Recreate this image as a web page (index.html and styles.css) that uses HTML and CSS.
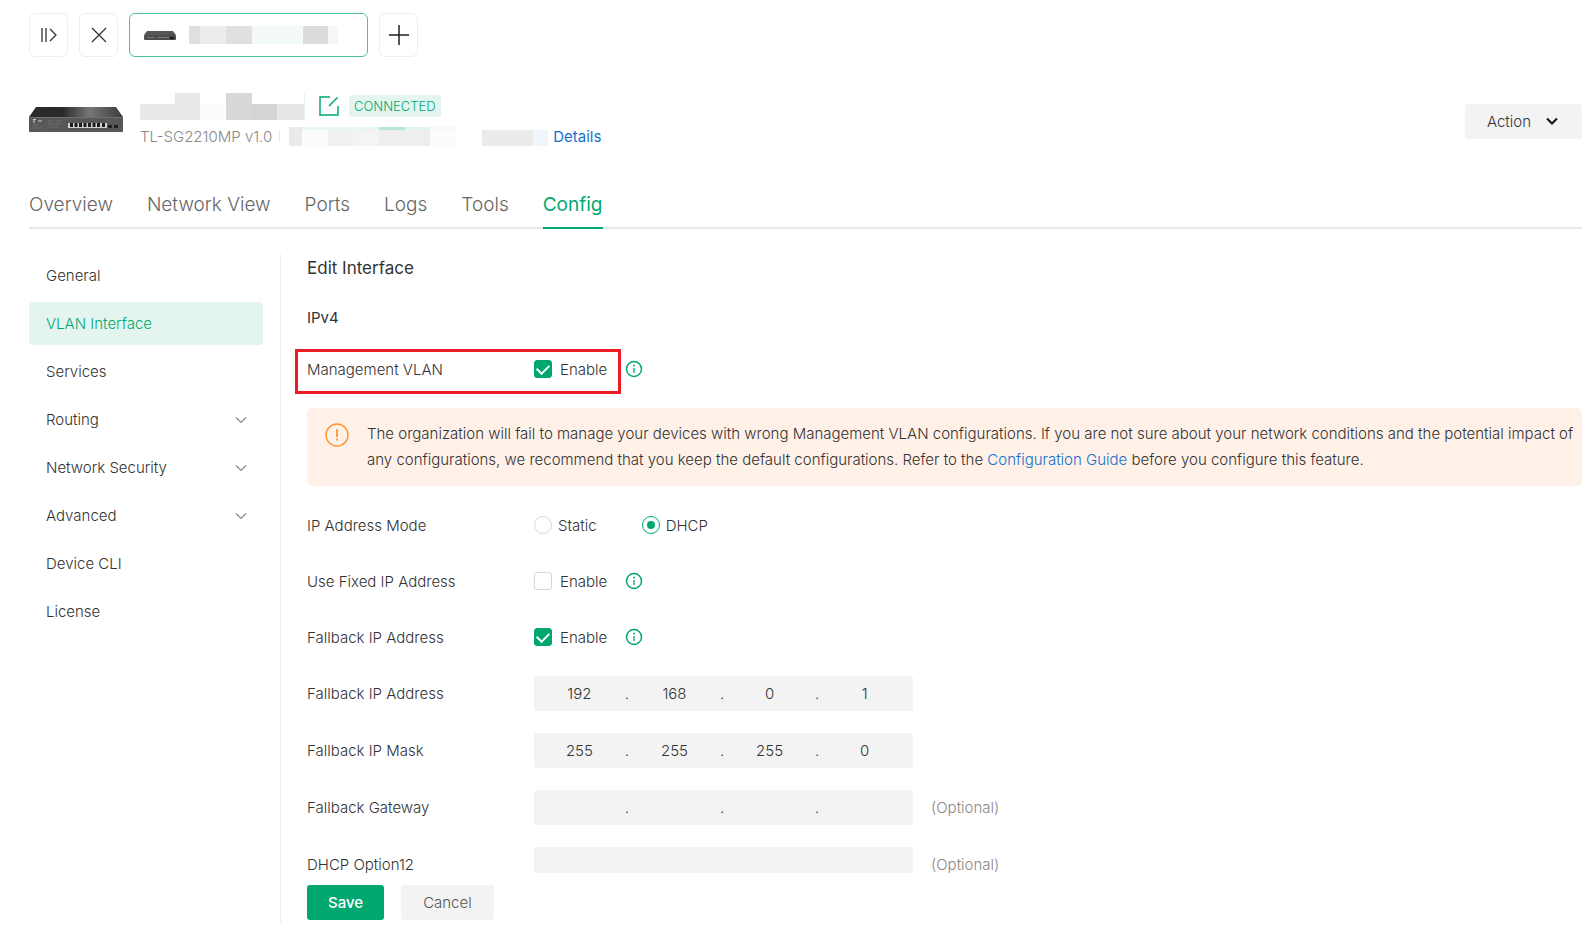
FILE: index.html
```html
<!DOCTYPE html>
<html lang="en">
<head>
  <meta charset="UTF-8">
  <meta name="viewport" content="width=device-width, initial-scale=1.0">
  <title>Device Config</title>
  <link rel="stylesheet" href="styles.css">
</head>
<body>
  <!-- shared shapes -->
  <svg class="defs" aria-hidden="true">
    <linearGradient id="top-shade" x1="0" x2="1">
      <stop offset="0" stop-color="#2c2c2c"/>
      <stop offset="0.35" stop-color="#2a2a2a"/>
      <stop offset="0.65" stop-color="#777"/>
      <stop offset="1" stop-color="#3a3a3a"/>
    </linearGradient>
    <symbol id="switch" viewBox="0 0 94 25">
      <path d="M7 0H87L94 10H0Z" fill="url(#top-shade)"/>
      <rect y="10" width="94" height="15" rx="1" fill="#58585a"/>
      <path d="M0 10.500H94" stroke="#707070"/>
      <path d="M4 12.500h3M5 12v4M9 14h4" stroke="#ccc" stroke-width="1"/>
      <path d="M4 18h5M4 21h10M19 14h6M27 14h5M19 17h14M19 20h10" stroke="#6c6c6c" stroke-width="1"/>
      <rect x="39" y="16" width="39" height="5" fill="#d2d2d2"/>
      <path d="M42.500 16v4M47 16v4M51.500 16v4M56 16v4M60.500 16v4M65 16v4M69.500 16v4M74.500 16v4" stroke="#1c1c1c" stroke-width="3"/>
      <path d="M79 19.500h4M85 19.500h4" stroke="#222" stroke-width="3"/>
    </symbol>
    <symbol id="switch-small" viewBox="0 0 32 9">
      <path d="M3 0H29L32 4H0Z" fill="#555"/>
      <rect y="4" width="32" height="5" rx="1" fill="#4c4c4e"/>
      <path d="M3 6.500h8M14 6.500h11" stroke="#777"/>
      <path d="M26 7h4" stroke="#1c1c1c" stroke-width="2"/>
    </symbol>
    <symbol id="info" viewBox="0 0 18 18">
      <circle cx="9" cy="9" r="7.500" fill="none" stroke="#00a870" stroke-width="1.500"/>
      <path d="M9 8v5" stroke="#00a870" stroke-width="1.300"/>
      <circle cx="9" cy="5.500" r="0.900" fill="#00a870"/>
    </symbol>
    <symbol id="chevron" viewBox="0 0 12 12">
      <path d="M1 3.500L6 8.500L11 3.500" fill="none" stroke="currentColor" stroke-width="1.200"/>
    </symbol>
  </svg>

  <div class="device-bar">
    <button class="bar-button" aria-label="Expand">
      <svg width="20" height="20" viewBox="0 0 20 20"><path d="M3 3v14M7 3v14M11 4l6 6l-6 6" fill="none" stroke="#333" stroke-width="1.300"/></svg>
    </button>
    <button class="bar-button" aria-label="Close">
      <svg width="20" height="20" viewBox="0 0 20 20"><path d="M3 3l14 14M17 3L3 17" fill="none" stroke="#333" stroke-width="1.300"/></svg>
    </button>
    <button class="device-tab" aria-label="Device">
      <svg width="32" height="9"><use href="#switch-small"/></svg>
      <svg width="149" height="18">
        <rect width="11" height="18" fill="#dfdfdf"/>
        <rect x="11" width="26" height="18" fill="#ececec"/>
        <rect x="37" width="26" height="18" fill="#e0e0e0"/>
        <rect x="63" width="51" height="18" fill="#f4faf8"/>
        <rect x="114" width="25" height="18" fill="#dcdcdc"/>
        <rect x="139" width="10" height="18" fill="#f6f6f6"/>
      </svg>
    </button>
    <button class="bar-button" aria-label="Add">
      <svg width="20" height="20" viewBox="0 0 20 20"><path d="M0 10h20M10 0v20" stroke="#222" stroke-width="1.500"/></svg>
    </button>
  </div>

  <header class="device-header">
    <svg class="device-picture" width="94" height="25"><use href="#switch"/></svg>
    <div class="device-info">
      <div class="device-line">
        <svg width="165" height="27">
          <rect y="11" width="35" height="16" fill="#e9e9e9"/>
          <rect x="35" width="25" height="27" fill="#e8e8e8"/>
          <rect x="60" y="11" width="26" height="16" fill="#fcfcfc"/>
          <rect x="86" width="26" height="27" fill="#d8d8d8"/>
          <rect x="112" y="11" width="25" height="16" fill="#d4d4d4"/>
          <rect x="137" y="11" width="27" height="16" fill="#e6e6e6"/>
          <rect x="164" width="1" height="27" fill="#e6f5f0"/>
        </svg>
        <button class="edit-button" aria-label="Edit name">
          <svg width="22" height="22" viewBox="0 0 22 22"><path d="M12 2H2V20H20V11M11 11L19.500 2.500" fill="none" stroke="#00a870" stroke-width="1.500"/></svg>
        </button>
        <span class="badge">CONNECTED</span>
      </div>
      <div class="device-line model-line">
        <span>TL-SG2210MP v1.0</span>
        <i class="separator"></i>
        <svg width="259" height="19">
          <rect width="13" height="19" fill="#eaeaea"/>
          <rect x="13" width="26" height="19" fill="#fcfcfc"/>
          <rect x="39" width="25" height="19" fill="#f0f0f0"/>
          <rect x="64" width="26" height="19" fill="#f4f4f4"/>
          <rect x="90" width="51" height="19" fill="#eee"/>
          <rect x="141" width="26" height="19" fill="#fcfcfc"/>
          <rect x="13" width="77" height="3" fill="#e8f6f1"/>
          <rect x="90" width="26" height="3" fill="#b8e6d6"/>
          <rect x="116" width="25" height="3" fill="#dff3eb"/>
          <rect x="141" width="26" height="3" fill="#f5fbf9"/>
          <rect x="193" y="3" width="51" height="16" fill="#ebebeb"/>
          <rect x="244" y="3" width="15" height="16" fill="#f0f5fc"/>
        </svg>
        <a href="#">Details</a>
      </div>
    </div>
    <button class="action-button">Action <svg width="12" height="12" viewBox="0 0 12 12"><path d="M1 3.500L6 8.500L11 3.500" fill="none" stroke="#111" stroke-width="2"/></svg></button>
  </header>

  <nav class="tabs">
    <a href="#">Overview</a>
    <a href="#">Network View</a>
    <a href="#">Ports</a>
    <a href="#">Logs</a>
    <a href="#">Tools</a>
    <a href="#" class="active">Config</a>
  </nav>

  <div class="content">
    <nav class="sidebar">
      <a href="#">General</a>
      <a href="#" class="active">VLAN Interface</a>
      <a href="#">Services</a>
      <a href="#">Routing <svg width="12" height="12"><use href="#chevron"/></svg></a>
      <a href="#">Network Security <svg width="12" height="12"><use href="#chevron"/></svg></a>
      <a href="#">Advanced <svg width="12" height="12"><use href="#chevron"/></svg></a>
      <a href="#">Device CLI</a>
      <a href="#">License</a>
    </nav>

    <form class="panel">
      <div class="fields">
        <h2>Edit Interface</h2>
        <h3>IPv4</h3>

        <div class="row management">
          <span class="label">Management VLAN</span>
          <label class="check"><input type="checkbox" checked> Enable</label>
          <svg class="info" width="18" height="18"><use href="#info"/></svg>
          <div class="highlight"></div>
        </div>

        <div class="alert">
          <svg width="24" height="24" viewBox="0 0 24 24"><circle cx="12" cy="12" r="11" fill="none" stroke="#ff9433" stroke-width="1.400"/><path d="M12 6v8M12 15.500v2" stroke="#ff9433" stroke-width="1.800"/></svg>
          <p>The organization will fail to manage your devices with wrong Management VLAN configurations. If you are not sure about your network conditions and the potential impact of any configurations, we recommend that you keep the default configurations. Refer to the <a href="#">Configuration Guide</a> before you configure this feature.</p>
        </div>

        <div class="row">
          <span class="label">IP Address Mode</span>
          <label class="radio"><input type="radio" name="mode"> Static</label>
          <label class="radio"><input type="radio" name="mode" checked> DHCP</label>
        </div>
        <div class="row">
          <span class="label">Use Fixed IP Address</span>
          <label class="check"><input type="checkbox"> Enable</label>
          <svg class="info" width="18" height="18"><use href="#info"/></svg>
        </div>
        <div class="row">
          <span class="label">Fallback IP Address</span>
          <label class="check"><input type="checkbox" checked> Enable</label>
          <svg class="info" width="18" height="18"><use href="#info"/></svg>
        </div>

        <div class="row">
          <label class="label" for="ip">Fallback IP Address</label>
          <div class="ip-box">
            <input type="text" id="ip" value="192"><span>.</span>
            <input type="text" aria-label="IP part 2" value="168"><span>.</span>
            <input type="text" aria-label="IP part 3" value="0"><span>.</span>
            <input type="text" aria-label="IP part 4" value="1">
          </div>
        </div>
        <div class="row">
          <label class="label" for="mask">Fallback IP Mask</label>
          <div class="ip-box">
            <input type="text" id="mask" value="255"><span>.</span>
            <input type="text" aria-label="Mask part 2" value="255"><span>.</span>
            <input type="text" aria-label="Mask part 3" value="255"><span>.</span>
            <input type="text" aria-label="Mask part 4" value="0">
          </div>
        </div>
        <div class="row">
          <label class="label" for="gateway">Fallback Gateway</label>
          <div class="ip-box">
            <input type="text" id="gateway"><span>.</span>
            <input type="text" aria-label="Gateway part 2"><span>.</span>
            <input type="text" aria-label="Gateway part 3"><span>.</span>
            <input type="text" aria-label="Gateway part 4">
          </div>
          <span class="optional">(Optional)</span>
        </div>
        <div class="row">
          <label class="label" for="option12">DHCP Option12</label>
          <input type="text" id="option12" class="text-box">
          <span class="optional">(Optional)</span>
        </div>
      </div>

      <div class="buttons">
        <button type="button" class="save">Save</button>
        <button type="button" class="cancel">Cancel</button>
      </div>
    </form>
  </div>
</body>
</html>
```
FILE: styles.css
```css
* {
  box-sizing: border-box;
}

body {
  display: flex;
  flex-direction: column;
  height: 100vh;
  margin: 0;
  padding: 13px 12px 8px 29px;
  font-family: Inter, "Liberation Sans", sans-serif;
  font-size: 15px;
  font-weight: 300;
  color: #333;
  background: #fff;
}

button, input {
  font: inherit;
  color: inherit;
}

button {
  border: none;
  cursor: pointer;
}

a {
  color: #1270cc;
  text-decoration: none;
}

svg {
  display: block;
  flex: none;
}

.defs {
  position: absolute;
  width: 0;
  height: 0;
}

/* open devices */
.device-bar {
  display: flex;
  gap: 11px;
}

.bar-button,
.device-tab {
  display: flex;
  align-items: center;
  justify-content: center;
  width: 39px;
  height: 44px;
  padding: 0;
  background: #fff;
  border: 1px solid #eee;
  border-radius: 6px;
}

.device-tab {
  justify-content: flex-start;
  gap: 13px;
  width: 239px;
  padding: 0 14px;
  border-color: #4cc39d;
}

/* device header */
.device-header {
  display: flex;
  align-items: center;
  margin-top: 34px;
}

.device-picture {
  margin: 0 17px 4px 0;
}

.device-info {
  flex: 1;
}

.device-line {
  display: flex;
  align-items: center;
  height: 30px;
}

.edit-button {
  margin: 0 9px 0 13px;
  padding: 0;
  background: none;
}

.badge {
  padding: 0 5px;
  font-size: 13px;
  line-height: 22px;
  color: #00a870;
  background: #e4f5ef;
  border-radius: 3px;
}

.model-line {
  color: #888;
}

.separator {
  width: 1px;
  height: 12px;
  margin: 0 9px 0 7px;
  background: #e5e5e5;
}

.model-line a {
  margin-left: 5px;
  font-weight: 400;
}

.action-button {
  display: flex;
  align-items: center;
  gap: 15px;
  height: 35px;
  padding: 0 24px 0 22px;
  background: #f3f3f3;
  border-radius: 3px;
}

/* tabs */
.tabs {
  display: flex;
  gap: 34px;
  margin-top: 40px;
  border-bottom: 2px solid #e8e8e8;
}

.tabs a {
  margin-bottom: -2px;
  padding-bottom: 8px;
  font-size: 19px;
  line-height: 28px;
  color: #666;
  border-bottom: 2px solid transparent;
}

.tabs .active {
  font-weight: 400;
  color: #00a870;
  border-color: #00a870;
}

/* content */
.content {
  display: flex;
  flex: 1;
  min-height: 0;
  margin-top: 25px;
}

.sidebar {
  display: flex;
  flex-direction: column;
  gap: 5px;
  width: 252px;
  padding-right: 17px;
  border-right: 1px solid #eee;
}

.sidebar a {
  display: flex;
  align-items: center;
  justify-content: space-between;
  height: 43px;
  padding: 0 16px 0 17px;
  color: #333;
  border-radius: 4px;
}

.sidebar .active {
  color: #00a870;
  background: #e4f5ef;
}

.sidebar svg {
  color: #888;
}

.panel {
  display: flex;
  flex: 1;
  flex-direction: column;
  min-width: 0;
  padding: 0 0 3px 26px;
}

/* keeps room on the left for the highlight frame */
.fields {
  flex: 1;
  min-height: 0;
  margin-left: -12px;
  padding-left: 12px;
  overflow: hidden;
}

h2, h3 {
  margin: 0;
  font-weight: 400;
  color: #333;
}

h2 {
  font-size: 17px;
  line-height: 28px;
}

h3 {
  margin: 22px 0 20px;
  font-size: 15px;
  line-height: 28px;
}

.row {
  display: flex;
  align-items: center;
  min-height: 34px;
  margin-bottom: 22px;
}

.label {
  width: 227px;
}

.management {
  position: relative;
}

.highlight {
  position: absolute;
  top: -3px;
  left: -12px;
  width: 326px;
  height: 45px;
  border: 3px solid #ed1c24;
}

.check,
.radio {
  display: flex;
  align-items: center;
  gap: 8px;
}

.radio {
  gap: 6px;
  margin-right: 45px;
}

.check input,
.radio input {
  display: grid;
  place-content: center;
  appearance: none;
  width: 18px;
  height: 18px;
  margin: 0;
  border: 1px solid #d8d8d8;
  border-radius: 3px;
}

.radio input {
  border-radius: 50%;
}

.check input:checked {
  background: #00a870;
  border-color: #00a870;
}

.check input:checked::before {
  content: "";
  width: 10px;
  height: 6px;
  border: solid #fff;
  border-width: 0 0 2px 2px;
  transform: translateY(-1px) rotate(-45deg);
}

.radio input:checked {
  border-color: #00a870;
}

.radio input:checked::before {
  content: "";
  width: 8px;
  height: 8px;
  background: #00a870;
  border-radius: 50%;
}

.info {
  margin-left: 18px;
}

.alert {
  display: flex;
  gap: 18px;
  margin-bottom: 22px;
  padding: 13px 6px 13px 18px;
  background: #fff1e8;
  border-radius: 5px;
}

.alert svg {
  margin-top: 2px;
}

.alert p {
  margin: 0;
  line-height: 26px;
}

.ip-box,
.text-box {
  display: flex;
  align-items: center;
  width: 379px;
  height: 35px;
  background: #f3f3f3;
  border: none;
  border-radius: 3px;
}

.ip-box {
  padding-right: 3px;
}

.ip-box input {
  flex: 1;
  width: 0;
  padding: 0;
  text-align: center;
  background: none;
  border: none;
}

.optional {
  margin-left: 18px;
  color: #888;
}

.buttons {
  display: flex;
  gap: 17px;
  padding-top: 12px;
}

.save,
.cancel {
  height: 35px;
  padding: 0 21px;
  border-radius: 3px;
}

.save {
  font-weight: 500;
  color: #fff;
  background: #00a870;
}

.cancel {
  padding: 0 22px;
  color: #555;
  background: #f3f3f3;
}
```
